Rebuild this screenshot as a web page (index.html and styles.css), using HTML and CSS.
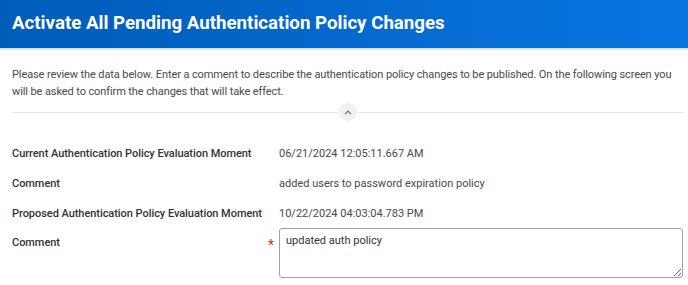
FILE: index.html
```html
<!DOCTYPE html>
<html lang="en">
<head>
    <meta charset="UTF-8">
    <meta name="viewport" content="width=device-width, initial-scale=1.0">
    <title>Activate All Pending Authentication Policy Changes</title>
    <link rel="stylesheet" href="styles.css">
</head>
<body>
    <div class="page-header">
        <h1>Activate All Pending Authentication Policy Changes</h1>
    </div>

    <div class="page-body">
        <p class="intro">Please review the data below. Enter a comment to describe the authentication policy changes to be published. On the following screen you will be asked to confirm the changes that will take effect.</p>

        <div class="divider">
            <button class="collapse-btn" aria-label="Collapse">
                <svg width="8" height="5" viewBox="0 0 8 5"><path d="M1 4.2 L4 1.2 L7 4.2" fill="none" stroke="#666" stroke-width="1.2"/></svg>
            </button>
        </div>

        <div class="field-list">
            <div class="field-row">
                <div class="field-label">Current Authentication Policy Evaluation Moment</div>
                <div class="field-value">06/21/2024 12:05:11.667 AM</div>
            </div>
            <div class="field-row">
                <div class="field-label">Comment</div>
                <div class="field-value">added users to password expiration policy</div>
            </div>
            <div class="field-row">
                <div class="field-label">Proposed Authentication Policy Evaluation Moment</div>
                <div class="field-value">10/22/2024 04:03:04.783 PM</div>
            </div>
            <div class="field-row input-row">
                <div class="field-label">Comment <span class="required">*</span></div>
                <div class="field-value">
                    <textarea class="comment-box">updated auth policy</textarea>
                </div>
            </div>
        </div>
    </div>
</body>
</html>
```

FILE: styles.css
```css
:root {
    --blue-dark: #005cb9;
    --blue-light: #0875e1;
    --text: #333333;
    --muted: #494949;
    --line: #e6e6e6;
}

body {
    font-family: Roboto, 'Liberation Sans', sans-serif;
    margin: 0;
    padding: 0;
    background-color: white;
    color: var(--text);
}

.page-header {
    height: 50px;
    box-sizing: border-box;
    padding: 0 12px 3px;
    background: linear-gradient(90deg, var(--blue-dark), var(--blue-light));
    border-bottom: 2px solid #dbe5f0;
    display: flex;
    align-items: center;
}

.page-header h1 {
    margin: 0;
    font-size: 18.7px;
    font-weight: bold;
    color: white;
}

.page-body {
    padding: 16px 2px 0 12px;
}

.intro {
    margin: 0;
    font-size: 11px;
    line-height: 17px;
    letter-spacing: -0.1px;
    color: var(--muted);
}

.divider {
    position: relative;
    height: 1px;
    background-color: var(--line);
    margin: 12px 2px 0 0;
    display: flex;
    justify-content: center;
}

.collapse-btn {
    position: absolute;
    top: -9px;
    width: 18px;
    height: 18px;
    border-radius: 50%;
    border: none;
    background-color: #f0f0f0;
    padding: 0;
    display: flex;
    justify-content: center;
    align-items: center;
}

.field-list {
    margin-top: 25px;
}

.field-row {
    display: flex;
    align-items: center;
    min-height: 30px;
    font-size: 11px;
}

.field-label {
    width: 267px;
    font-weight: 500;
    letter-spacing: -0.05px;
    color: var(--text);
    display: flex;
    justify-content: space-between;
}

.field-value {
    flex: 1;
    color: var(--muted);
}

.input-row {
    align-items: flex-start;
}

.input-row .field-label {
    padding-top: 8px;
}

.input-row .field-value {
    padding-right: 3px;
}

.required {
    color: #de2e21;
    font-weight: normal;
    font-size: 14px;
    line-height: 11px;
    padding-top: 4px;
    margin-right: 5px;
}

.comment-box {
    display: block;
    box-sizing: border-box;
    width: 100%;
    height: 50px;
    border: 1px solid #a0a0a0;
    border-radius: 3px;
    padding: 5px 6px;
    font-family: Roboto, 'Liberation Sans', sans-serif;
    font-size: 11px;
    color: var(--text);
    resize: vertical;
}
```
